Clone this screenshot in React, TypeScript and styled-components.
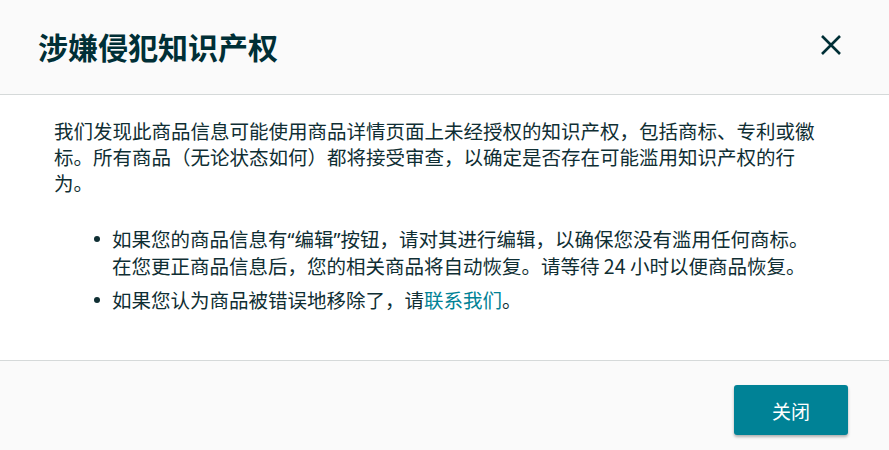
import React from "react";
import styled, { createGlobalStyle } from "styled-components";

const Global = createGlobalStyle`
  html, body { margin: 0; padding: 0; background: #ffffff; }
  body { font-family: "Noto Sans CJK SC", "Noto Sans", sans-serif; }
  * { box-sizing: border-box; }
`;

const Dialog = styled.div`
  width: 889px;
  height: 450px;
  display: flex;
  flex-direction: column;
  overflow: hidden;
  background: #ffffff;
`;

const Header = styled.header`
  height: 95px;
  flex: none;
  display: flex;
  align-items: center;
  justify-content: space-between;
  padding: 0 44px 0 38px;
  background: #fafafa;
  border-bottom: 1px solid #d5d9d9;
`;

const Title = styled.h1`
  margin: 0;
  font-size: 30px;
  font-weight: 700;
  color: #002f36;
  line-height: 1;
  padding-bottom: 2px;
`;

const CloseButton = styled.button`
  width: 28px;
  height: 28px;
  padding: 0;
  border: none;
  background: transparent;
  display: flex;
  align-items: center;
  justify-content: center;
  cursor: pointer;
  color: #002f36;
  margin-top: -4px;
`;

const Body = styled.div`
  flex: none;
  height: 265px;
  padding: 23px 60px 0 54px;
  color: #0f2e33;
  font-size: 19.5px;
  line-height: 26px;
`;

const Paragraph = styled.p`
  margin: 0;
`;

const List = styled.ul`
  margin: 30px 0 0;
  padding-left: 58px;
  display: flex;
  flex-direction: column;
  gap: 8px;
  list-style: none;
`;

const Item = styled.li`
  position: relative;
  &::before {
    content: "";
    position: absolute;
    left: -18px;
    top: 10px;
    width: 6px;
    height: 6px;
    border-radius: 50%;
    background: #0f2e33;
  }
`;

const Quote = styled.span`
  font-family: "Noto Sans", "DejaVu Sans", sans-serif;
`;

const Link = styled.a`
  color: #008296;
  text-decoration: none;
`;

const Footer = styled.footer`
  flex: 1;
  background: #fafafa;
  border-top: 1px solid #d5d9d9;
  display: flex;
  justify-content: flex-end;
  align-items: flex-start;
  padding: 24px 41px 0 0;
`;

const PrimaryButton = styled.button`
  width: 114px;
  height: 50px;
  border: none;
  border-radius: 3px;
  background: #008296;
  color: #ffffff;
  font-family: "Noto Sans CJK SC", "Noto Sans", sans-serif;
  font-size: 19px;
  box-shadow: 0 2px 3px rgba(0, 0, 0, 0.3);
  cursor: pointer;
`;

export default function App() {
  return (
    <>
      <Global />
      <Dialog>
        <Header>
          <Title>涉嫌侵犯知识产权</Title>
          <CloseButton aria-label="关闭">
            <svg width="22" height="22" viewBox="0 0 22 22" fill="none">
              <path d="M2 2 L20 20 M20 2 L2 20" stroke="currentColor" strokeWidth="2.6" strokeLinecap="butt" />
            </svg>
          </CloseButton>
        </Header>
        <Body>
          <Paragraph>
            我们发现此商品信息可能使用商品详情页面上未经授权的知识产权，包括商标、专利或徽标。所有商品（无论状态如何）都将接受审查，以确定是否存在可能滥用知识产权的行为。
          </Paragraph>
          <List>
            <Item>
              如果您的商品信息有<Quote>“</Quote>编辑<Quote>”</Quote>按钮，请对其进行编辑，以确保您没有滥用任何商标。
              <br />
              在您更正商品信息后，您的相关商品将自动恢复。请等待 24 小时以便商品恢复。
            </Item>
            <Item>
              如果您认为商品被错误地移除了，请<Link href="#">联系我们</Link>。
            </Item>
          </List>
        </Body>
        <Footer>
          <PrimaryButton>关闭</PrimaryButton>
        </Footer>
      </Dialog>
    </>
  );
}
